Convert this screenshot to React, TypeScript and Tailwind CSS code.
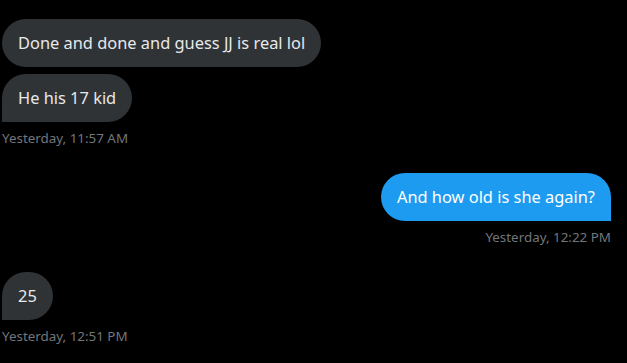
import React from 'react';

type Msg = { text: string; tail?: boolean };

type Group = { messages: Msg[]; mine?: boolean; time: string };

const groups: Group[] = [
  {
    messages: [
      { text: 'Done and done and guess JJ is real lol' },
      { text: 'He his 17 kid', tail: true },
    ],
    time: 'Yesterday, 11:57 AM',
  },
  {
    mine: true,
    messages: [{ text: 'And how old is she again?', tail: true }],
    time: 'Yesterday, 12:22 PM',
  },
  {
    messages: [{ text: '25', tail: true }],
    time: 'Yesterday, 12:51 PM',
  },
];

function Bubble({ msg, mine }: { msg: Msg; mine?: boolean }) {
  const corner = msg.tail ? (mine ? 'rounded-br-none' : 'rounded-bl-none') : '';
  return (
    <div
      className={`px-4 py-3 rounded-3xl text-[16.4px] leading-6 ${corner} ${
        mine ? 'bg-[#1d9bf0] text-white' : 'bg-[#2f3336] text-[#e7e9ea]'
      }`}
    >
      {msg.text}
    </div>
  );
}

export default function App() {
  return (
    <div
      className="w-[627px] h-[363px] bg-black overflow-hidden pl-[2px] pr-4 pt-[19px]"
      style={{ fontFamily: '"Noto Sans", Arial, sans-serif' }}
    >
      <div className="flex flex-col gap-[27px]">
        {groups.map((g, i) => (
          <div key={i} className={`flex flex-col ${g.mine ? 'items-end' : 'items-start'}`}>
            <div className={`flex flex-col gap-[7px] ${g.mine ? 'items-end' : 'items-start'}`}>
              {g.messages.map((m, j) => (
                <Bubble key={j} msg={m} mine={g.mine} />
              ))}
            </div>
            <div className="mt-[8px] text-[13.4px] leading-4 text-[#71767b]">{g.time}</div>
          </div>
        ))}
      </div>
    </div>
  );
}
